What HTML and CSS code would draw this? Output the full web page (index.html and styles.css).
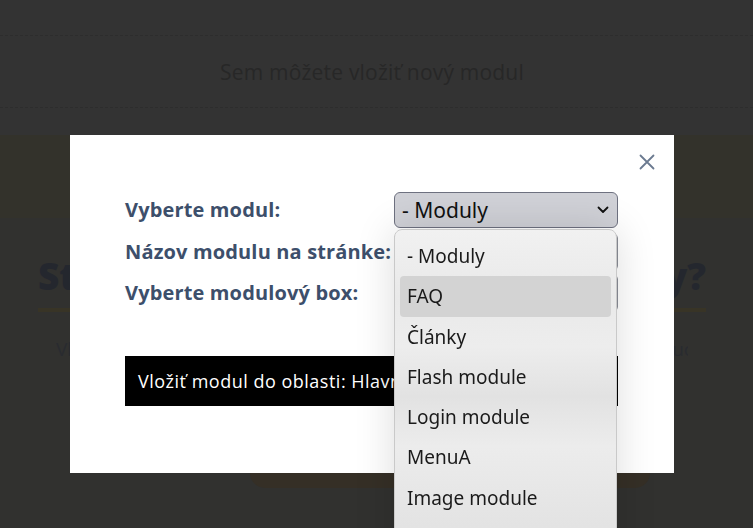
FILE: index.html
```html
<!DOCTYPE html>
<html lang="sk">
<head>
<meta charset="utf-8">
<title>Moduly</title>
<link rel="stylesheet" href="styles.css">
</head>
<body>
<div class="page">
  <section class="drop">
    <div class="drop-box">Sem môžete vložiť nový modul</div>
  </section>
  <section class="band"></section>
  <section class="intro">
    <h1 class="intro-title">Stále nemáte žiadne moduly?</h1>
    <p class="intro-text">Vložte nový modul a upravte obsah podľa svojich potrieb, je to jednoduché a rýchle pre vás.</p>
    <div class="intro-btn"></div>
  </section>
</div>

<div class="modal">
  <div class="modal-head">
    <button class="close" aria-label="Zavrieť">
      <svg width="16" height="16" viewBox="0 0 16 16"><path d="M1.5 1.5 L14.5 14.5 M14.5 1.5 L1.5 14.5" stroke="#6b7a90" stroke-width="1.8" fill="none" stroke-linecap="round"/></svg>
    </button>
  </div>
  <div class="form">
    <label class="lbl">Vyberte modul:</label>
    <div class="ctrl">
      <div class="select open">
        <span>- Moduly</span>
        <svg class="chev" width="12" height="8" viewBox="0 0 12 8"><path d="M1.5 1.5 L6 6 L10.5 1.5" stroke="#111" stroke-width="1.8" fill="none" stroke-linecap="round" stroke-linejoin="round"/></svg>
      </div>
      <ul class="list">
        <li>- Moduly</li>
        <li class="hl">FAQ</li>
        <li>Články</li>
        <li>Flash module</li>
        <li>Login module</li>
        <li>MenuA</li>
        <li>Image module</li>
        <li>Text module</li>
      </ul>
    </div>
    <label class="lbl">Názov modulu na stránke:</label>
    <div class="ctrl"><div class="input"></div></div>
    <label class="lbl">Vyberte modulový box:</label>
    <div class="ctrl"><div class="input"></div></div>
  </div>
  <button class="submit">Vložiť modul do oblasti: Hlavný obsah</button>
</div>
</body>
</html>
```
FILE: styles.css
```css
html, body {
  margin: 0;
  padding: 0;
  height: 100%;
  overflow: hidden;
  background: #31312f;
}
.page {
  font-family: "Open Sans", "Liberation Sans", sans-serif;
}
.drop {
  height: 135px;
  background: #333333;
  padding-top: 35px;
  box-sizing: border-box;
}
.drop-box {
  height: 73px;
  border-top: 1px dashed #2d2d2d;
  border-bottom: 1px dashed #2d2d2d;
  box-sizing: border-box;
  display: flex;
  align-items: center;
  justify-content: center;
  padding-right: 9px;
  color: #272727;
  font-size: 21px;
  letter-spacing: 0.2px;
  font-family: "Open Sans", sans-serif;
}
.band {
  height: 83px;
  background: #33322b;
}
.intro {
  background: #31312f;
  padding: 36px 47px 0 38px;
  height: 310px;
  box-sizing: border-box;
}
.intro-title {
  margin: 0;
  font-size: 37px;
  font-weight: 800;
  color: #24272e;
  padding-bottom: 10px;
  border-bottom: 4px solid #383426;
  line-height: 44px;
  text-align: justify;
  text-align-last: justify;
}
.intro-text {
  margin: 24px 18px 0;
  font-size: 19px;
  color: #292b30;
  text-align: justify;
  text-align-last: justify;
  white-space: nowrap;
  overflow: hidden;
}
.intro-btn {
  margin: 66px 0 0 212px;
  width: 400px;
  height: 60px;
  border-radius: 15px;
  background: #352f26;
}

.modal {
  position: fixed;
  left: 70px;
  top: 135px;
  width: 604px;
  height: 338px;
  background: #ffffff;
  box-sizing: border-box;
  padding: 0 56px 0 55px;
}
.modal-head {
  height: 57px;
  box-sizing: border-box;
  padding-top: 19px;
  display: flex;
  justify-content: flex-end;
  align-items: flex-start;
  margin-right: -37px;
}
.close {
  border: 0;
  background: transparent;
  padding: 0;
  width: 16px;
  height: 16px;
  display: block;
}
.close svg { display: block; }
.form {
  display: grid;
  grid-template-columns: 269px 224px;
  grid-auto-rows: 41.5px;
  align-items: start;
}
.lbl {
  font-family: "Open Sans", sans-serif;
  font-weight: 700;
  font-size: 20px;
  line-height: 36px;
  letter-spacing: 0.15px;
  color: #3d4f6b;
  white-space: nowrap;
}
.ctrl {
  position: relative;
  height: 36px;
}
.select {
  height: 36px;
  box-sizing: border-box;
  border: 1px solid #6e7180;
  border-radius: 6px;
  background: #d0d1d7;
  display: flex;
  align-items: center;
  justify-content: space-between;
  padding: 0 8px 0 7px;
  font-family: "Noto Sans", "Open Sans", sans-serif;
  font-size: 21px;
  color: #111;
}
.input {
  height: 36px;
  box-sizing: border-box;
  border: 1px solid #8a8d96;
  border-radius: 4px;
  background: #fff;
}
.list {
  position: absolute;
  z-index: 5;
  left: 0;
  top: 37px;
  width: 223px;
  margin: 0;
  padding: 6px 5px 5px;
  box-sizing: border-box;
  list-style: none;
  border: 1px solid #c9c9c9;
  border-radius: 8px 8px 0 0;
  background: linear-gradient(#f1f1f1, #e9e9e9 20%, #ededed 35%, #e2e2e2 50%, #ececec 65%, #dfdfdf 100%);
  box-shadow: 0 0 40px rgba(0, 0, 0, 0.14);
  font-family: "Noto Sans", "Open Sans", sans-serif;
  font-size: 19px;
  color: #1a1a1a;
}
.list li {
  height: 40.3px;
  line-height: 40px;
  padding-left: 7px;
  border-radius: 4px;
  white-space: nowrap;
}
.list li.hl {
  background: #d3d3d3;
}
.submit {
  margin-top: 39.5px;
  width: 493px;
  height: 50px;
  border: 0;
  background: #000;
  color: #fff;
  text-align: left;
  padding: 0 13px;
  font-family: "Open Sans", sans-serif;
  font-size: 18px;
  letter-spacing: 0.5px;
  white-space: nowrap;
  overflow: hidden;
  display: block;
}
```
